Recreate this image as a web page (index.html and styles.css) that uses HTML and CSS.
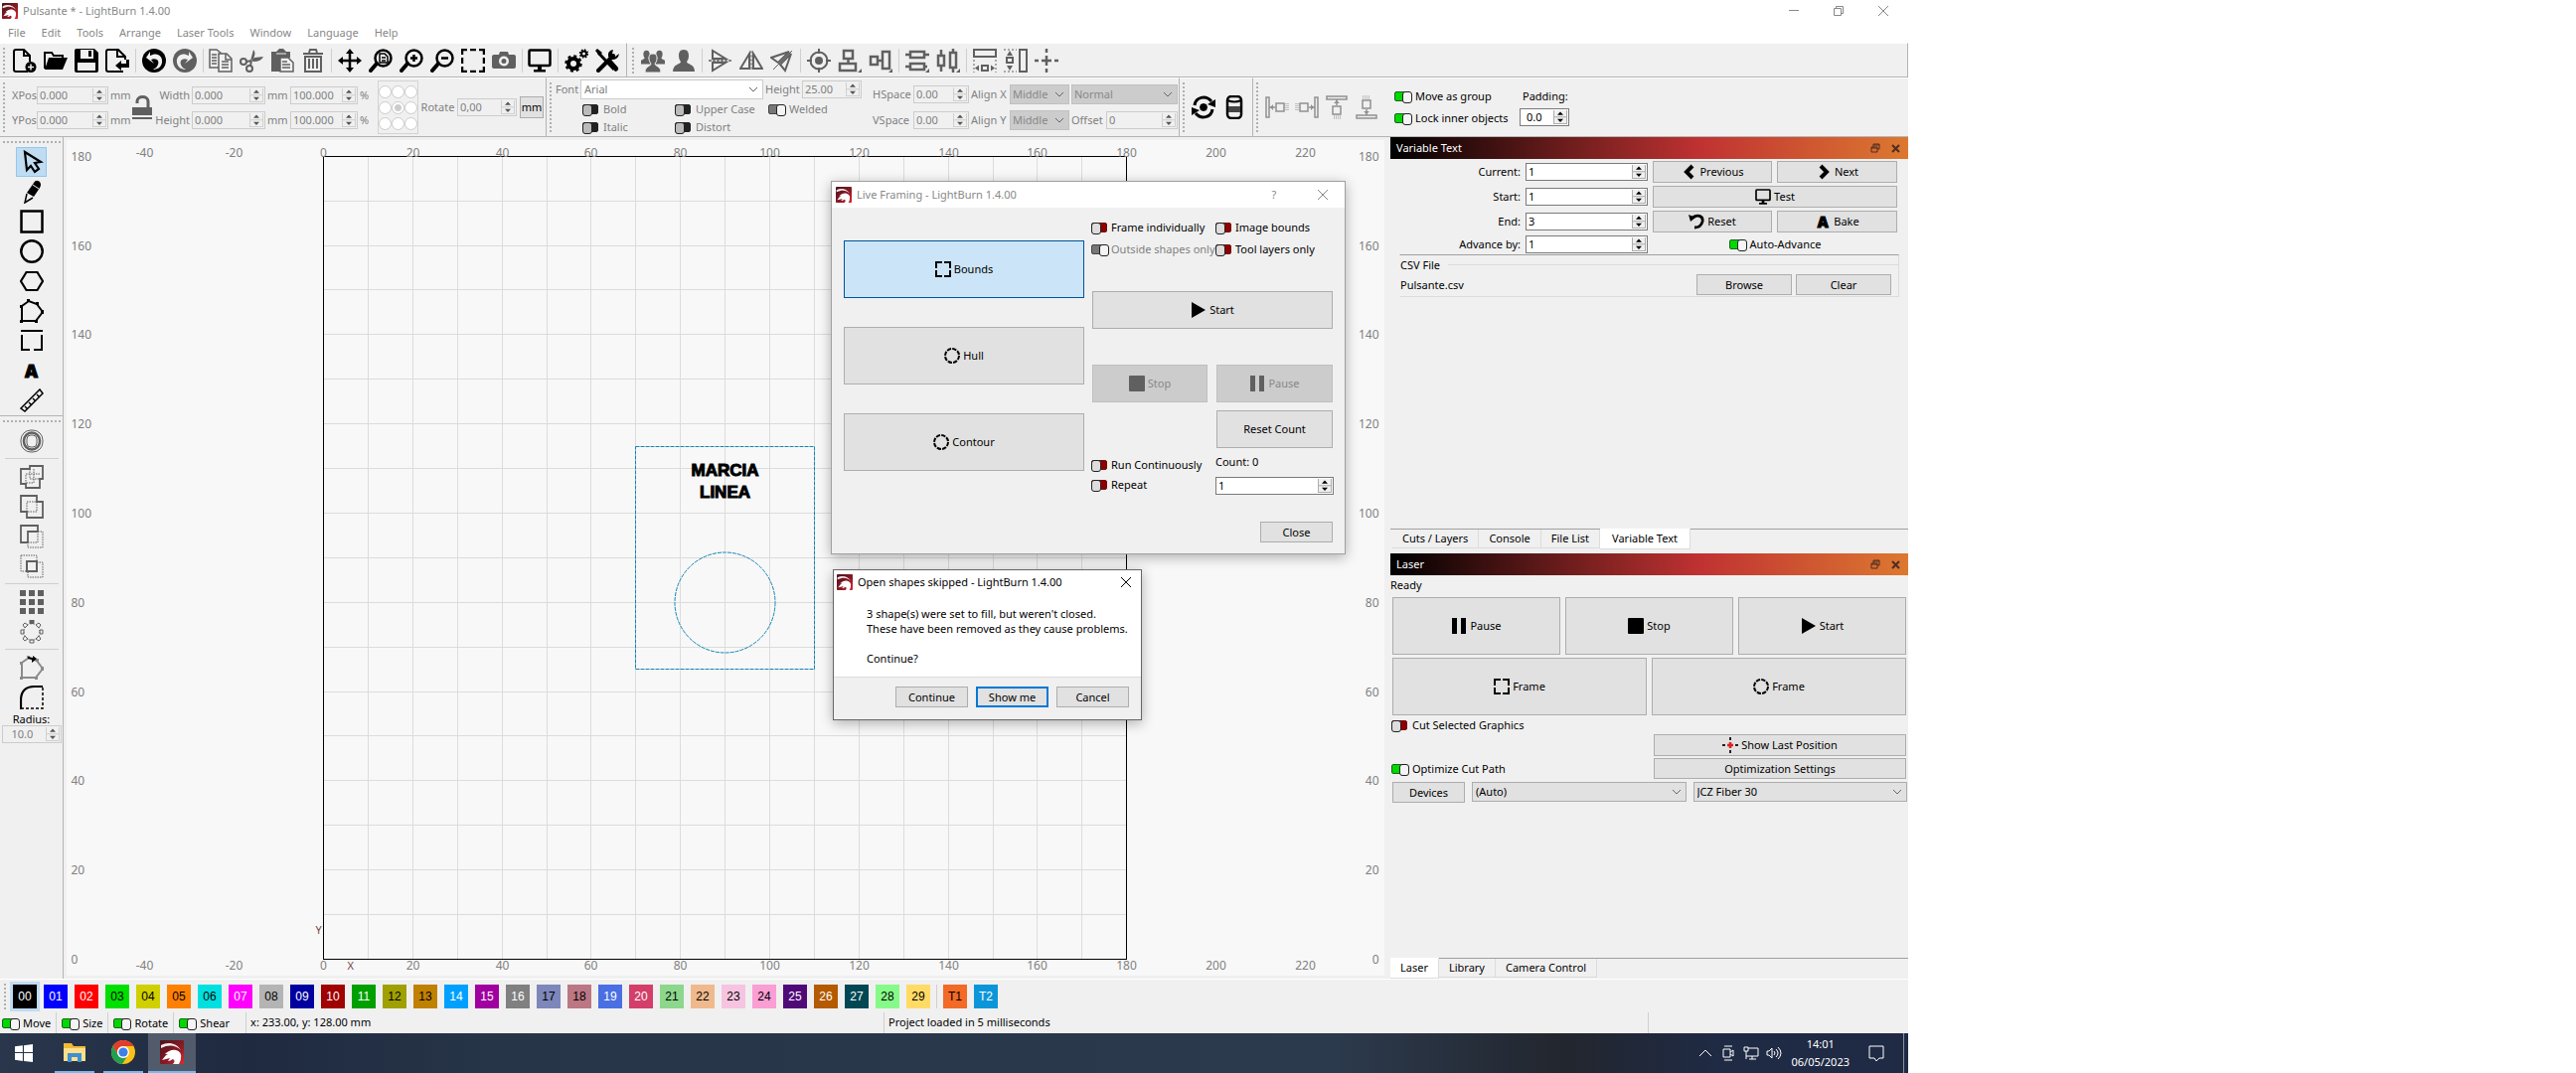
FILE: index.html
```html
<!DOCTYPE html>
<html lang="en">
<head>
<meta charset="utf-8">
<title>Pulsante * - LightBurn 1.4.00</title>
<link rel="stylesheet" href="styles.css">
</head>
<body>
<svg class="defs" aria-hidden="true">
<defs>
<linearGradient id="g-logo" x1="0" y1="0" x2="1" y2="1"><stop offset="0" stop-color="#4a141c"/><stop offset=".6" stop-color="#8c1a26"/><stop offset="1" stop-color="#e02a30"/></linearGradient>
<symbol id="logo" viewBox="0 0 24 24"><rect width="24" height="24" rx="1" fill="url(#g-logo)"/><path d="M1 5C8 1 17 3 21 10c-5-5-12-6-20-2z" fill="#f3e9e9"/><path d="M2 20c2-2 3-5 6-6l-3 0c3-3 7-5 11-4 4 1 6 4 5 8 0 2-1 4-2 6h-6c2-2 2-4 0-5-2 1-3 2-5 2l2-3-4 1z" fill="#fff"/></symbol>
<symbol id="new" viewBox="0 0 24 24"><path d="M15 23H3q-2 0-2-2V3q0-2 2-2h8l6 6v6M11 1v6h6" fill="none" stroke="currentColor" stroke-width="2"/><circle cx="18" cy="18.500" r="5.500" fill="currentColor"/><path d="M18 15.500v6M15 18.500h6" stroke="#f0f0f0" stroke-width="1.500"/></symbol>
<symbol id="open" viewBox="0 0 24 24"><path d="M1 20V4h7l2 3h9v3" fill="none" stroke="currentColor" stroke-width="2"/><path d="M5 9h19l-5 12H1z" fill="currentColor"/></symbol>
<symbol id="save" viewBox="0 0 24 24"><path fill-rule="evenodd" fill="currentColor" d="M2 0h18l4 4v18q0 2-2 2H2q-2 0-2-2V2q0-2 2-2zM6 1v9h13V1zM3 14v8h18v-8zM14 2h3v6h-3z"/></symbol>
<symbol id="export" viewBox="0 0 24 24"><path d="M20 11V8l-7-7H3q-2 0-2 2v18q0 2 2 2h15M12 1v7h8" fill="none" stroke="currentColor" stroke-width="2"/><path d="M10 17l6-5v3h5v-4h3v8h-8v3z" fill="currentColor"/></symbol>
<symbol id="undo" viewBox="0 0 24 24"><circle cx="12" cy="12" r="12" fill="currentColor"/><path d="M4 9l4-6v4c7-4 13 0 12 7-1 5-5 7-9 7 5-2 7-8 4-10-2-1-4-1-6 0l3 4z" fill="#f0f0f0"/></symbol>
<symbol id="copy" viewBox="0 0 24 24"><g fill="#f0f0f0" stroke="currentColor" stroke-width="1.500"><path d="M1 1h7l5 4v14H1z"/><path d="M10 5h8l5 5v13H10z"/></g><path d="M3 6h5M3 9h5M3 12h5M3 15h5M13 13h7M13 16h7M13 19h7M17 5v6h6" stroke="currentColor" stroke-width="1.500" fill="none"/></symbol>
<symbol id="cut" viewBox="0 0 24 24"><g fill="none" stroke="currentColor" stroke-width="2"><circle cx="4" cy="13" r="3"/><circle cx="10" cy="20" r="3"/><path d="M7 13l5-1M11 17l1-5"/></g><path d="M11 12L14 1q3 3 0 9zM12 12l3-3 9-1q-2 5-10 5z" fill="currentColor"/></symbol>
<symbol id="paste" viewBox="0 0 24 24"><path d="M1 3h5l3-3h4l3 3h4v6h-9v14H1z" fill="currentColor"/><path d="M6 5h10" stroke="#f0f0f0"/><path d="M10 9h8l5 5v9H10z" fill="#f0f0f0" stroke="currentColor" stroke-width="1.500"/><path d="M12 13h5M12 16h8M12 19h8" stroke="currentColor" stroke-width="1.500"/></symbol>
<symbol id="trash" viewBox="0 0 24 24"><path d="M2 5h20M8 4l1-3h6l1 3M4 8v15h16V8z" fill="none" stroke="currentColor" stroke-width="2"/><path d="M8 10v10M12 10v10M16 10v10" stroke="currentColor" stroke-width="2"/></symbol>
<symbol id="move" viewBox="0 0 24 24"><path d="M12 3v18M3 12h18" stroke="currentColor" stroke-width="2.500"/><path d="M12 0l4 5H8zM12 24l-4-5h8zM0 12l5-4v8zM24 12l-5 4V8z" fill="currentColor"/></symbol>
<symbol id="mag" viewBox="0 0 24 24"><circle cx="14.500" cy="9.500" r="8" fill="none" stroke="currentColor" stroke-width="2.500"/><path d="M8 15l-6 7" stroke="currentColor" stroke-width="4" stroke-linecap="round"/></symbol>
<symbol id="zpage" viewBox="0 0 24 24"><use href="#mag"/><path d="M11 5h5l3 3v6h-8zM13 9h4M13 12h4" fill="none" stroke="currentColor" stroke-width="1.500"/></symbol>
<symbol id="zin" viewBox="0 0 24 24"><use href="#mag"/><path d="M14.500 6v7M11 9.500h7" stroke="currentColor" stroke-width="2.500"/></symbol>
<symbol id="zout" viewBox="0 0 24 24"><use href="#mag"/><path d="M11 9.500h7" stroke="currentColor" stroke-width="2.500"/></symbol>
<symbol id="marquee" viewBox="0 0 24 24"><path d="M1 6V1h5M9 1h6M18 1h5v5M23 9v6M23 18v5h-5M15 23H9M6 23H1v-5M1 15V9" fill="none" stroke="currentColor" stroke-width="2.500"/></symbol>
<symbol id="camera" viewBox="0 0 24 24"><path fill-rule="evenodd" fill="currentColor" d="M2 6h5l1-3h8l1 3h5q2 0 2 2v10q0 2-2 2H2q-2 0-2-2V8q0-2 2-2zM12 7.500a5 5 0 100 10 5 5 0 000-10zM12 10a2.500 2.500 0 110 5 2.500 2.500 0 010-5z"/></symbol>
<symbol id="monitor" viewBox="0 0 24 24"><rect x="1.500" y="1.500" width="21" height="15.500" rx="1" fill="none" stroke="currentColor" stroke-width="2.500"/><path d="M10 17h4v4h4v2.500H6V21h4z" fill="currentColor"/></symbol>
<symbol id="gears" viewBox="0 0 24 24"><g fill="none" stroke="currentColor"><circle cx="9" cy="15" r="5" stroke-width="4"/><circle cx="9" cy="15" r="7.500" stroke-width="2.500" stroke-dasharray="3 2.890"/><circle cx="19.500" cy="5" r="2.500" stroke-width="2"/><circle cx="19.500" cy="5" r="4" stroke-width="1.500" stroke-dasharray="1.600 1.540"/></g></symbol>
<symbol id="tools" viewBox="0 0 24 24"><path d="M3 4l16 17" stroke="currentColor" stroke-width="3"/><path d="M13 14l3-3 7 8q1 3-3 4z M0 2l2-2 5 4-3 3z" fill="currentColor"/><path d="M3 22L18 7" stroke="currentColor" stroke-width="4" stroke-linecap="round"/><path d="M18 1q-6 1-5 7l4 3q6 0 7-6l-4 3-3-3z" fill="currentColor"/></symbol>
<symbol id="person" viewBox="0 0 24 24"><path d="M12 1c4 0 5 3 5 6s-1 5-2 6c0 3 8 2 8 10H1c0-8 8-7 8-10-1-1-2-3-2-6s1-6 5-6z" fill="currentColor"/></symbol>
<symbol id="people" viewBox="0 0 24 24"><g fill="currentColor"><use href="#person" x="-2" y="0" width="15" height="17"/><use href="#person" x="11" y="0" width="15" height="17"/><path stroke="#f0f0f0" d="M12 5c4 0 4 3 4 5s-1 4-2 5c0 3 6 2 6 9H4c0-7 6-6 6-9-1-1-2-3-2-5s0-5 4-5z"/></g></symbol>
<symbol id="flipv" viewBox="0 0 24 24"><path d="M4 2v8h13zM4 22v-8h13z" fill="none" stroke="currentColor" stroke-width="2"/><path d="M0 12h24" stroke="currentColor" stroke-width="1.500" stroke-dasharray="3 1"/></symbol>
<symbol id="fliph" viewBox="0 0 24 24"><path d="M1 20h9V5zM23 20h-9V5z" fill="none" stroke="currentColor" stroke-width="2"/><path d="M12 2v20" stroke="currentColor" stroke-dasharray="3 1"/></symbol>
<symbol id="mirror" viewBox="0 0 24 24"><path d="M1 9l18-6L8 14zM21 5L10 16l5 6z" fill="none" stroke="currentColor" stroke-width="2"/><path d="M3 21L22 2" stroke="currentColor"/></symbol>
<symbol id="target" viewBox="0 0 24 24"><circle cx="12" cy="12" r="8.500" fill="none" stroke="currentColor" stroke-width="2"/><circle cx="12" cy="12" r="4" fill="currentColor"/><path d="M12 0v5M12 19v5M0 12h5M19 12h5" stroke="currentColor" stroke-width="2"/></symbol>
<symbol id="alv" viewBox="0 0 24 24"><path d="M6 2h9v8H6zM2 15h16v7H2zM10.500 10v5" fill="none" stroke="currentColor" stroke-width="2.500"/><path d="M24 20v4h-4z" fill="currentColor"/></symbol>
<symbol id="alh" viewBox="0 0 24 24"><path d="M2 8h7v8H2zM14 3h7v17h-7zM9 12h5" fill="none" stroke="currentColor" stroke-width="2.500"/><path d="M24 20v4h-4z" fill="currentColor"/></symbol>
<symbol id="div" viewBox="0 0 24 24"><path d="M5 3h14v6H5zM5 15h14v6H5zM0 6h5M19 6h5M0 18h5M19 18h3" fill="none" stroke="currentColor" stroke-width="2.500"/><path d="M24 20v4h-4z" fill="currentColor"/></symbol>
<symbol id="dih" viewBox="0 0 24 24"><path d="M2 7h6v10H2zM14 4h6v15h-6zM5 1v6M5 17v6M17 0v4M17 19v5" fill="none" stroke="currentColor" stroke-width="2.500"/><path d="M24 20v4h-4z" fill="currentColor"/></symbol>
<symbol id="mvw" viewBox="0 0 24 24"><path d="M1 1h22v7H1zM9 17h6v5H9z" fill="none" stroke="currentColor" stroke-width="2"/><path d="M1 11v13M23 11v13" stroke="currentColor" stroke-dasharray="2 2"/><path d="M2 19.500l4-3v6zM22 19.500l-4-3v6z" fill="currentColor"/></symbol>
<symbol id="mvh" viewBox="0 0 24 24"><path d="M16 1h7v22h-7zM3 9h6v5H3z" fill="none" stroke="currentColor" stroke-width="2"/><path d="M0 1h13M0 23h13" stroke="currentColor" stroke-dasharray="2 2"/><path d="M6 2l3 5H3zM6 22l-3-5h6z" fill="currentColor"/></symbol>
<symbol id="cross" viewBox="0 0 24 24"><path d="M12 0v4M12 7v10M12 20v4M0 12h4M7 12h10M20 12h4" stroke="currentColor" stroke-width="2.500"/></symbol>
<symbol id="lock" viewBox="0 0 24 24"><path d="M2 12h20v8H2zM2 22h20v2H2z" fill="currentColor"/><path d="M7 8V6c0-6 11-6 11 0v6" fill="none" stroke="currentColor" stroke-width="3"/></symbol>
<symbol id="cycle" viewBox="0 0 24 24"><path d="M3 10C4 2 14-1 20 6M21 14c-1 8-11 11-17 4" fill="none" stroke="currentColor" stroke-width="3"/><path d="M24 4v8l-8-3zM0 20v-8l8 3z" fill="currentColor"/><path d="M12 8l3 1 1 3-1 3-3 1-3-1-1-3 1-3z" fill="currentColor"/></symbol>
<symbol id="rotary" viewBox="0 0 24 24"><rect x="5" y="1" width="14" height="22" rx="4" fill="none" stroke="currentColor" stroke-width="2.500"/><path d="M5 5q7 3 14 0" fill="none" stroke="currentColor" stroke-width="2"/><path d="M6 11h12v6H6z" fill="#444"/></symbol>
<symbol id="pushl" viewBox="0 0 24 24"><path d="M1 2h3v20H1zM11 8h8v8h-8zM4 12h6" fill="none" stroke="currentColor" stroke-width="1.500"/><path d="M5 12l3-3v6z" fill="currentColor"/><path d="M21 8v8M23 8v8" stroke="currentColor" stroke-dasharray="1 1"/></symbol>
<symbol id="arrow" viewBox="0 0 24 24"><path d="M5 2l16 10-6 1 4 6-4 3-4-6-4 4z" fill="none" stroke="currentColor" stroke-width="2.200"/></symbol>
<symbol id="pencil" viewBox="0 0 24 24"><path d="M14 3q2-4 6-1 2 3 0 6l-6 9-7-4z" fill="currentColor"/><path d="M7 14l-2 9 8-5" fill="none" stroke="currentColor" stroke-width="1.500"/><path d="M13 5l6 4" stroke="#f0f0f0"/></symbol>
<symbol id="rect" viewBox="0 0 24 24"><rect x="1.500" y="1.500" width="21" height="21" fill="none" stroke="currentColor" stroke-width="2.500"/></symbol>
<symbol id="ellipse" viewBox="0 0 24 24"><circle cx="12" cy="12" r="10.700" fill="none" stroke="currentColor" stroke-width="2.500"/></symbol>
<symbol id="hexagon" viewBox="0 0 24 24"><path d="M1 12l5.500-9h11L23 12l-5.500 9h-11z" fill="none" stroke="currentColor" stroke-width="2.200"/></symbol>
<symbol id="poly" viewBox="0 0 24 24"><path d="M2 22V7l7-5 8 3 6 8-7 9z" fill="none" stroke="currentColor" stroke-width="2"/><path d="M0 6h3v3H0zM7 0h3v3H7zM16 3h3v3h-3zM21 11h3v4h-3zM15 21h3v3h-3zM0 21h3v3H0z" fill="currentColor"/></symbol>
<symbol id="brackets" viewBox="0 0 24 24"><path d="M1 2h22M2 6v15h8M14 21h8V6" fill="none" stroke="currentColor" stroke-width="2"/></symbol>
<symbol id="ruler" viewBox="0 0 24 24"><path d="M1 20L20 1l3 4L5 23zM5 18l2 2M9 14l2 2M13 10l2 2M17 6l2 2" fill="none" stroke="currentColor" stroke-width="1.500"/></symbol>
<symbol id="offset" viewBox="0 0 24 24"><g fill="none" stroke="currentColor"><rect x="1" y="1" width="22" height="22" rx="10"/><rect x="4" y="3.500" width="16" height="17" rx="8" stroke-width="2.500"/><rect x="7" y="6" width="10" height="12" rx="4"/></g></symbol>
<symbol id="weld" viewBox="0 0 24 24"><path d="M1 4h9V1h13v13h-3v9H6v-4H1z" fill="none" stroke="currentColor" stroke-width="1.800"/><path d="M10 4v10h10M6 19V9h14M14 4v14H6" fill="none" stroke="currentColor" stroke-dasharray="1.500 1"/></symbol>
<symbol id="union" viewBox="0 0 24 24"><path d="M1 1h16v6h6v16H7v-6H1z" fill="none" stroke="currentColor" stroke-width="1.800"/><path d="M7 7h10v10H7z" fill="none" stroke="currentColor" stroke-dasharray="1.500 1"/></symbol>
<symbol id="subtract" viewBox="0 0 24 24"><path d="M1 1h17v6H8v11H1z" fill="none" stroke="currentColor" stroke-width="1.800"/><path d="M8 18h10V7M18 7h5v16H8v-5" fill="none" stroke="currentColor" stroke-dasharray="1.500 1"/></symbol>
<symbol id="intersect" viewBox="0 0 24 24"><path d="M7 7h10v10H7z" fill="none" stroke="currentColor" stroke-width="2"/><path d="M1 1h16v6M1 1v16h6M17 8h6v15H8v-6" fill="none" stroke="currentColor" stroke-dasharray="1.500 1"/></symbol>
<symbol id="grid" viewBox="0 0 24 24"><path d="M0 0h6v6H0zM9 0h6v6H9zM18 0h6v6h-6zM0 9h6v6H0zM9 9h6v6H9zM18 9h6v6h-6zM0 18h6v6H0zM9 18h6v6H9zM18 18h6v6h-6z" fill="currentColor"/></symbol>
<symbol id="ring" viewBox="0 0 24 24"><path d="M9.500 0h5v4h-5z" fill="currentColor"/><path d="M10 20h4v3h-4zM1 10h3v4H1zM20 10h3v4h-3zM5 3l3 2-3 3-2-3zM19 3l2 2-2 3-3-3zM5 16l3 3-3 2-2-2zM19 16l2 3-2 2-3-2z" fill="none" stroke="currentColor"/><circle cx="12" cy="12" r="8" fill="none" stroke="currentColor" stroke-dasharray="1 2"/></symbol>
<symbol id="startpt" viewBox="0 0 24 24"><use href="#poly" opacity=".7"/><path d="M8 1l5 1V0l4 3-5 4V4L8 3z" fill="#000"/></symbol>
<symbol id="radius" viewBox="0 0 24 24"><path d="M1 24V15Q1 1 15 1h8" fill="none" stroke="currentColor" stroke-width="2.200"/><path d="M23 2v21H1" fill="none" stroke="currentColor" stroke-width="1.500" stroke-dasharray="3 2"/></symbol>
<symbol id="fsq" viewBox="0 0 16 16"><path d="M1 7V1h6M9 1h6v6M15 9v6H9M7 15H1V9" fill="none" stroke="currentColor" stroke-width="2"/></symbol>
<symbol id="fci" viewBox="0 0 16 16"><circle cx="8" cy="8" r="7" fill="none" stroke="currentColor" stroke-width="2" stroke-dasharray="4.300 1.200"/></symbol>
<symbol id="play" viewBox="0 0 16 16"><path d="M1 0l14 8-14 8z" fill="currentColor"/></symbol>
<symbol id="stop" viewBox="0 0 16 16"><rect width="16" height="16" rx="1" fill="currentColor"/></symbol>
<symbol id="pause" viewBox="0 0 16 16"><path d="M1 0h5v16H1zM10 0h5v16h-5z" fill="currentColor"/></symbol>
<symbol id="prev" viewBox="0 0 16 16"><path d="M12 2L6 8l6 6" fill="none" stroke="currentColor" stroke-width="4"/></symbol>
<symbol id="next" viewBox="0 0 16 16"><path d="M5 2l6 6-6 6" fill="none" stroke="currentColor" stroke-width="4"/></symbol>
<symbol id="reset" viewBox="0 0 16 16"><path d="M4 4c6-4 11-1 10 4-1 4-4 6-8 6" fill="none" stroke="currentColor" stroke-width="2.800"/><path d="M0 1l2 7 5-4z" fill="currentColor"/></symbol>
<symbol id="lastpos" viewBox="0 0 16 16"><path d="M8 0v3M8 13v3M0 8h3M13 8h3" stroke="#222" stroke-width="2"/><path d="M8 5v6M5 8h6" stroke="#e02020" stroke-width="2.500"/></symbol>
<symbol id="close" viewBox="0 0 10 10"><path d="M0 0l10 10M10 0L0 10" stroke="currentColor"/></symbol>
<symbol id="dclose" viewBox="0 0 10 10"><path d="M1 2l7 7M8 2L1 9" stroke="currentColor" stroke-width="2"/></symbol>
<symbol id="float" viewBox="0 0 10 10"><path d="M3 4V1h6v5H7M1 4h6v5H1zM1 5h6M3 2h6" fill="none" stroke="currentColor"/></symbol>
<symbol id="restore" viewBox="0 0 10 10"><path d="M2.500 2.500v-2h7v7h-2M.500 2.500h7v7h-7z" fill="none" stroke="currentColor"/></symbol>
<symbol id="min" viewBox="0 0 10 10"><path d="M0 4.500h10" stroke="currentColor"/></symbol>
<symbol id="win" viewBox="0 0 16 16"><path d="M0 2l7-1v6H0zM8 1l8-1v7H8zM0 8h7v7l-7-1zM8 8h8v8l-8-1z" fill="#fff"/></symbol>
<symbol id="folder" viewBox="0 0 24 24"><path d="M1 3h8l2 3h12v15H1z" fill="#f0b93a"/><path d="M1 8h22v13H1z" fill="#ffe08a"/><path d="M5 22v-9h14v9h-4v-5H9v5z" fill="#3f8fd2"/></symbol>
<symbol id="chrome" viewBox="0 0 24 24"><circle cx="12" cy="12" r="12" fill="#fbc116"/><path d="M1.600 6A12 12 0 0122.400 6H12a6 6 0 00-5.500 8.500z" fill="#e33b2e"/><path d="M1.600 6A12 12 0 0011 24l5.500-8.500a6 6 0 01-9.700-.5z" fill="#1ea052"/><circle cx="12" cy="12" r="6" fill="#fff"/><circle cx="12" cy="12" r="4.600" fill="#3f7fe8"/></symbol>
</defs>
</svg>

<div class="screen">
<main class="desktop">
  <header class="titlebar">
    <svg class="i16"><use href="#logo"/></svg><h1>Pulsante * - LightBurn 1.4.00</h1>
    <div class="winbtns"><button aria-label="Minimize"><svg class="i10"><use href="#min"/></svg></button><button aria-label="Restore"><svg class="i10"><use href="#restore"/></svg></button><button aria-label="Close"><svg class="i10"><use href="#close"/></svg></button></div>
  </header>
  <nav class="menu"><a href="#">File</a><a href="#">Edit</a><a href="#">Tools</a><a href="#">Arrange</a><a href="#">Laser Tools</a><a href="#">Window</a><a href="#">Language</a><a href="#">Help</a></nav>

  <div class="barrow icons">
    <div class="bar main-bar"><i class="grip"></i>
      <button aria-label="New"><svg class="i24"><use href="#new"/></svg></button><button aria-label="Open"><svg class="i24"><use href="#open"/></svg></button><button aria-label="Save"><svg class="i24"><use href="#save"/></svg></button><button aria-label="Import"><svg class="i24"><use href="#export"/></svg></button><i class="sep"></i>
      <button aria-label="Undo"><svg class="i24"><use href="#undo"/></svg></button><button aria-label="Redo" class="off flip"><svg class="i24"><use href="#undo"/></svg></button><i class="sep"></i>
      <button aria-label="Copy" class="off"><svg class="i24"><use href="#copy"/></svg></button><button aria-label="Cut" class="off"><svg class="i24"><use href="#cut"/></svg></button><button aria-label="Paste" class="off"><svg class="i24"><use href="#paste"/></svg></button><button aria-label="Delete" class="off"><svg class="i24"><use href="#trash"/></svg></button><i class="sep"></i>
      <button aria-label="Pan"><svg class="i24"><use href="#move"/></svg></button><button aria-label="Zoom to page"><svg class="i24"><use href="#zpage"/></svg></button><button aria-label="Zoom in"><svg class="i24"><use href="#zin"/></svg></button><button aria-label="Zoom out"><svg class="i24"><use href="#zout"/></svg></button><button aria-label="Frame selection"><svg class="i24"><use href="#marquee"/></svg></button><button aria-label="Camera" class="off"><svg class="i24"><use href="#camera"/></svg></button><i class="sep"></i>
      <button aria-label="Preview"><svg class="i24"><use href="#monitor"/></svg></button><i class="sep"></i>
      <button aria-label="Settings"><svg class="i24"><use href="#gears"/></svg></button><button aria-label="Device settings"><svg class="i24"><use href="#tools"/></svg></button>
    </div>
    <div class="bar arrange-bar grow"><i class="grip"></i>
      <button aria-label="Group" class="off"><svg class="i24"><use href="#people"/></svg></button><button aria-label="Ungroup" class="off"><svg class="i24"><use href="#person"/></svg></button><i class="sep"></i>
      <button aria-label="Flip vertical" class="off"><svg class="i24"><use href="#flipv"/></svg></button><button aria-label="Flip horizontal" class="off"><svg class="i24"><use href="#fliph"/></svg></button><button aria-label="Mirror" class="off"><svg class="i24"><use href="#mirror"/></svg></button><i class="sep"></i>
      <button aria-label="Center" class="off"><svg class="i24"><use href="#target"/></svg></button><button aria-label="Align vertical" class="off"><svg class="i24"><use href="#alv"/></svg></button><button aria-label="Align horizontal" class="off"><svg class="i24"><use href="#alh"/></svg></button><i class="sep"></i>
      <button aria-label="Distribute vertical" class="off"><svg class="i24"><use href="#div"/></svg></button><button aria-label="Distribute horizontal" class="off"><svg class="i24"><use href="#dih"/></svg></button><i class="sep"></i>
      <button aria-label="Match width" class="off"><svg class="i24"><use href="#mvw"/></svg></button><button aria-label="Match height" class="off"><svg class="i24"><use href="#mvh"/></svg></button><button aria-label="Move to position" class="off"><svg class="i24"><use href="#cross"/></svg></button>
    </div>
  </div>

  <div class="barrow props">
    <div class="bar pos-bar dim"><i class="grip"></i>
      <div class="posgrid">
        <label for="xpos">XPos</label><span class="spin"><input id="xpos" value="0.000" disabled><b></b></span><span>mm</span>
        <svg class="i24 lock"><use href="#lock"/></svg>
        <label for="w" class="r">Width</label><span class="spin"><input id="w" value="0.000" disabled><b></b></span><span>mm</span><span class="spin"><input aria-label="Width percent" value="100.000" disabled><b></b></span><span>%</span>
        <label for="ypos">YPos</label><span class="spin"><input id="ypos" value="0.000" disabled><b></b></span><span>mm</span>
        <label for="h" class="r">Height</label><span class="spin"><input id="h" value="0.000" disabled><b></b></span><span>mm</span><span class="spin"><input aria-label="Height percent" value="100.000" disabled><b></b></span><span>%</span>
      </div>
      <div class="anchors"><input type="radio" name="a" aria-label="Top left" disabled><input type="radio" name="a" aria-label="Top" disabled><input type="radio" name="a" aria-label="Top right" disabled><input type="radio" name="a" aria-label="Left" disabled><input type="radio" name="a" aria-label="Center" checked disabled><input type="radio" name="a" aria-label="Right" disabled><input type="radio" name="a" aria-label="Bottom left" disabled><input type="radio" name="a" aria-label="Bottom" disabled><input type="radio" name="a" aria-label="Bottom right" disabled></div>
      <label for="rot" class="rot">Rotate</label><span class="spin rotspin"><input id="rot" value="0,00" disabled><b></b></span>
      <button class="btn mm">mm</button>
    </div>
    <div class="bar text-bar dim"><i class="grip"></i>
      <div class="fontbox">
        <div class="fontrow"><label for="font">Font</label><select id="font"><option>Arial</option></select><label for="fh">Height</label><span class="spin"><input id="fh" value="25.00" disabled><b></b></span></div>
        <div class="switches"><label><input type="checkbox" class="tg dark">Bold</label><label><input type="checkbox" class="tg dark">Upper Case</label><label><input type="checkbox" class="tg gray" checked>Welded</label><label><input type="checkbox" class="tg dark">Italic</label><label><input type="checkbox" class="tg dark">Distort</label></div>
      </div>
      <div class="spacing">
        <label for="hs">HSpace</label><span class="spin"><input id="hs" value="0.00" disabled><b></b></span><label for="ax" class="al">Align X</label><select id="ax" disabled><option>Middle</option></select><select class="wide" aria-label="Mode" disabled><option>Normal</option></select>
        <label for="vs">VSpace</label><span class="spin"><input id="vs" value="0.00" disabled><b></b></span><label for="ay" class="al">Align Y</label><select id="ay" disabled><option>Middle</option></select><span class="offs"><label for="of">Offset</label><span class="spin"><input id="of" value="0" disabled><b></b></span></span>
      </div>
    </div>
    <div class="bar rotary-bar"><i class="grip"></i><button aria-label="Rotary"><svg class="i24"><use href="#cycle"/></svg></button><button aria-label="Cylinder"><svg class="i24"><use href="#rotary"/></svg></button></div>
    <div class="bar dock-bar grow"><i class="grip"></i>
      <button class="faint" aria-label="Dock left"><svg class="i24"><use href="#pushl"/></svg></button><button class="faint flip" aria-label="Dock right"><svg class="i24"><use href="#pushl"/></svg></button><button class="faint up" aria-label="Dock up"><svg class="i24"><use href="#pushl"/></svg></button><button class="faint down" aria-label="Dock down"><svg class="i24"><use href="#pushl"/></svg></button>
      <div class="docksw"><label><input type="checkbox" class="tg" checked>Move as group</label><label><input type="checkbox" class="tg" checked>Lock inner objects</label></div>
      <div class="padding"><label for="pad">Padding:</label><span class="spin on"><input id="pad" value="0.0"><b></b></span></div>
    </div>
  </div>

  <div class="work">
    <aside class="rail">
      <div class="tools"><i class="hgrip"></i>
        <button class="sel" aria-label="Select"><svg class="i24"><use href="#arrow"/></svg></button><button aria-label="Draw lines"><svg class="i24"><use href="#pencil"/></svg></button><button aria-label="Rectangle"><svg class="i24"><use href="#rect"/></svg></button><button aria-label="Ellipse"><svg class="i24"><use href="#ellipse"/></svg></button><button aria-label="Polygon"><svg class="i24"><use href="#hexagon"/></svg></button><button aria-label="Edit nodes"><svg class="i24"><use href="#poly"/></svg></button><button aria-label="Tabs"><svg class="i24"><use href="#brackets"/></svg></button><button class="glyph">A</button><button aria-label="Measure"><svg class="i24"><use href="#ruler"/></svg></button>
      </div>
      <div class="tools lower"><i class="hgrip"></i>
        <button class="off" aria-label="Offset shapes"><svg class="i24"><use href="#offset"/></svg></button><i class="hsep"></i>
        <button class="off" aria-label="Weld"><svg class="i24"><use href="#weld"/></svg></button><button class="off" aria-label="Union"><svg class="i24"><use href="#union"/></svg></button><button class="off" aria-label="Subtract"><svg class="i24"><use href="#subtract"/></svg></button><button class="off" aria-label="Intersect"><svg class="i24"><use href="#intersect"/></svg></button><i class="hsep"></i>
        <button class="off" aria-label="Grid array"><svg class="i24"><use href="#grid"/></svg></button><button class="off" aria-label="Circular array"><svg class="i24"><use href="#ring"/></svg></button><i class="hsep"></i>
        <button class="off" aria-label="Start point"><svg class="i24"><use href="#startpt"/></svg></button><button aria-label="Radius"><svg class="i24"><use href="#radius"/></svg></button>
        <label for="rad">Radius:</label><span class="spin dim"><input id="rad" value="10.0" disabled><b></b></span>
      </div>
    </aside>

    <section class="canvas">
      <svg viewBox="0 0 1326 841" preserveAspectRatio="xMidYMid meet">
        <g transform="translate(258.500 824.500)">
          <path class="gl" d="M45 0v-808M90 0v-808M135 0v-808M180 0v-808M225 0v-808M269 0v-808M314 0v-808M359 0v-808M404 0v-808M449 0v-808M494 0v-808M539 0v-808M584 0v-808M629 0v-808M674 0v-808M718 0v-808M763 0v-808M0-45h808M0-90h808M0-135h808M0-180h808M0-225h808M0-269h808M0-314h808M0-359h808M0-404h808M0-449h808M0-494h808M0-539h808M0-584h808M0-629h808M0-674h808M0-718h808M0-763h808"/>
          <rect class="bed" x="0" y="-808" width="808" height="808"/>
          <g class="mid"><text x="-180" y="-808">-40</text><text x="-90" y="-808">-20</text><text x="0" y="-808">0</text><text x="90" y="-808">20</text><text x="180" y="-808">40</text><text x="269" y="-808">60</text><text x="359" y="-808">80</text><text x="449" y="-808">100</text><text x="539" y="-808">120</text><text x="629" y="-808">140</text><text x="718" y="-808">160</text><text x="808" y="-808">180</text><text x="898" y="-808">200</text><text x="988" y="-808">220</text>
          <text x="-180" y="10">-40</text><text x="-90" y="10">-20</text><text x="0" y="10">0</text><text x="90" y="10">20</text><text x="180" y="10">40</text><text x="269" y="10">60</text><text x="359" y="10">80</text><text x="449" y="10">100</text><text x="539" y="10">120</text><text x="629" y="10">140</text><text x="718" y="10">160</text><text x="808" y="10">180</text><text x="898" y="10">200</text><text x="988" y="10">220</text></g>
          <g><text x="-254" y="-804">180</text><text x="-254" y="-714">160</text><text x="-254" y="-625">140</text><text x="-254" y="-535">120</text><text x="-254" y="-445">100</text><text x="-254" y="-355">80</text><text x="-254" y="-265">60</text><text x="-254" y="-176">40</text><text x="-254" y="-86">20</text><text x="-254" y="4">0</text></g>
          <g class="end"><text x="1062" y="-804">180</text><text x="1062" y="-714">160</text><text x="1062" y="-625">140</text><text x="1062" y="-535">120</text><text x="1062" y="-445">100</text><text x="1062" y="-355">80</text><text x="1062" y="-265">60</text><text x="1062" y="-176">40</text><text x="1062" y="-86">20</text><text x="1062" y="4">0</text></g>
          <g class="axis"><text x="-8" y="-26">Y</text><text x="24" y="10">X</text></g>
          <rect class="shape" x="314" y="-516" width="180" height="224"/>
          <circle class="shape" cx="404" cy="-359" r="50.500"/>
          <g class="word"><text x="404" y="-487">MARCIA</text><text x="404" y="-465">LINEA</text></g>
        </g>
      </svg>
    </section>

    <aside class="docks">
      <section class="dock top">
        <h2>Variable Text<span><svg class="i10"><use href="#float"/></svg><svg class="i10"><use href="#dclose"/></svg></span></h2>
        <div class="vars">
          <label for="cur">Current:</label><span class="spin on"><input id="cur" value="1"><b></b></span><button class="btn"><svg class="i16"><use href="#prev"/></svg>Previous</button><button class="btn"><svg class="i16"><use href="#next"/></svg>Next</button>
          <label for="st">Start:</label><span class="spin on"><input id="st" value="1"><b></b></span><button class="btn two"><svg class="i16"><use href="#monitor"/></svg>Test</button>
          <label for="en">End:</label><span class="spin on"><input id="en" value="3"><b></b></span><button class="btn"><svg class="i16"><use href="#reset"/></svg>Reset</button><button class="btn"><span class="ga">A</span>Bake</button>
          <label for="ad">Advance by:</label><span class="spin on"><input id="ad" value="1"><b></b></span><label class="two auto"><input type="checkbox" class="tg" checked>Auto-Advance</label>
        </div>
        <fieldset class="csv"><legend>CSV File</legend><div><span>Pulsante.csv</span><button class="btn">Browse</button><button class="btn">Clear</button></div></fieldset>
        <nav class="tabs"><button>Cuts / Layers</button><button>Console</button><button>File List</button><button class="cur">Variable Text</button></nav>
      </section>
      <section class="dock bottom">
        <h2>Laser<span><svg class="i10"><use href="#float"/></svg><svg class="i10"><use href="#dclose"/></svg></span></h2>
        <p class="ready">Ready</p>
        <div class="run three"><button class="btn"><svg class="i16"><use href="#pause"/></svg>Pause</button><button class="btn"><svg class="i16"><use href="#stop"/></svg>Stop</button><button class="btn"><svg class="i16"><use href="#play"/></svg>Start</button></div>
        <div class="run"><button class="btn"><svg class="i16"><use href="#fsq"/></svg>Frame</button><button class="btn"><svg class="i16"><use href="#fci"/></svg>Frame</button></div>
        <label class="cutsel"><input type="checkbox" class="tg">Cut Selected Graphics</label>
        <div class="opt"><span></span><button class="btn"><svg class="i16"><use href="#lastpos"/></svg>Show Last Position</button><label><input type="checkbox" class="tg" checked>Optimize Cut Path</label><button class="btn">Optimization Settings</button></div>
        <div class="dev"><button class="btn">Devices</button><select aria-label="Port"><option>(Auto)</option></select><select aria-label="Device"><option>JCZ Fiber 30</option></select></div>
        <nav class="tabs low"><button class="cur">Laser</button><button>Library</button><button>Camera Control</button></nav>
      </section>
    </aside>

    <div class="dialog framing" role="dialog" aria-label="Live Framing">
      <header><svg class="i16"><use href="#logo"/></svg><span>Live Framing - LightBurn 1.4.00</span><button aria-label="Help">?</button><button aria-label="Close dialog"><svg class="i10"><use href="#close"/></svg></button></header>
      <div class="fbody">
        <div class="modes"><button class="btn on"><svg class="i16"><use href="#fsq"/></svg>Bounds</button><button class="btn"><svg class="i16"><use href="#fci"/></svg>Hull</button><button class="btn"><svg class="i16"><use href="#fci"/></svg>Contour</button></div>
        <div class="ctl">
          <label><input type="checkbox" class="tg">Frame individually</label><label><input type="checkbox" class="tg">Image bounds</label>
          <label class="dim"><input type="checkbox" class="tg gray" checked>Outside shapes only</label><label><input type="checkbox" class="tg">Tool layers only</label>
          <button class="btn two start"><svg class="i16"><use href="#play"/></svg>Start</button>
          <button class="btn" disabled><svg class="i16"><use href="#stop"/></svg>Stop</button><button class="btn" disabled><svg class="i16"><use href="#pause"/></svg>Pause</button>
          <button class="btn rc">Reset Count</button>
          <label class="rr"><input type="checkbox" class="tg">Run Continuously</label><label class="rr" for="rep">Count: 0</label>
          <label><input type="checkbox" class="tg">Repeat</label><span class="spin on"><input id="rep" value="1"><b></b></span>
          <button class="btn cl">Close</button>
        </div>
      </div>
    </div>
    <div class="dialog skipped" role="dialog" aria-label="Open shapes skipped">
      <header><svg class="i16"><use href="#logo"/></svg><span>Open shapes skipped - LightBurn 1.4.00</span><button aria-label="Close dialog"><svg class="i10"><use href="#close"/></svg></button></header>
      <div class="msg"><p>3 shape(s) were set to fill, but weren't closed.<br>These have been removed as they cause problems.</p><p>Continue?</p></div>
      <footer><button class="btn">Continue</button><button class="btn focus">Show me</button><button class="btn">Cancel</button></footer>
    </div>
  </div>

  <div class="palette"><i class="grip"></i>
    <button class="cur" style="--c:#000;--t:#fff">00</button><button style="--c:#00f;--t:#fff">01</button><button style="--c:#f00;--t:#fff">02</button><button style="--c:#00e000;--t:#000">03</button><button style="--c:#d0d000;--t:#000">04</button><button style="--c:#ff8000;--t:#000">05</button><button style="--c:#00e0e0;--t:#000">06</button><button style="--c:#f0f;--t:#fff">07</button><button style="--c:#b4b4b4;--t:#000">08</button><button style="--c:#0000a0;--t:#fff">09</button><button style="--c:#a00000;--t:#fff">10</button><button style="--c:#00a000;--t:#fff">11</button><button style="--c:#a0a000;--t:#000">12</button><button style="--c:#c08000;--t:#000">13</button><button style="--c:#00a0ff;--t:#fff">14</button><button style="--c:#a000a0;--t:#fff">15</button><button style="--c:#808080;--t:#fff">16</button><button style="--c:#7d87b9;--t:#000">17</button><button style="--c:#bb7784;--t:#000">18</button><button style="--c:#4a6fe3;--t:#fff">19</button><button style="--c:#d33f6a;--t:#fff">20</button><button style="--c:#8cd78c;--t:#000">21</button><button style="--c:#f0b98d;--t:#000">22</button><button style="--c:#f6c4e1;--t:#000">23</button><button style="--c:#fa9ed4;--t:#000">24</button><button style="--c:#500a78;--t:#fff">25</button><button style="--c:#b45a00;--t:#fff">26</button><button style="--c:#004754;--t:#fff">27</button><button style="--c:#86fa88;--t:#000">28</button><button style="--c:#ffdb66;--t:#000">29</button><i class="sep"></i><button style="--c:#f36926;--t:#000">T1</button><button style="--c:#0c96d9;--t:#fff">T2</button>
  </div>
  <div class="status">
    <label><input type="checkbox" class="tg" checked>Move</label><label><input type="checkbox" class="tg" checked>Size</label><label><input type="checkbox" class="tg" checked>Rotate</label><label class="shear"><input type="checkbox" class="tg" checked>Shear</label>
    <span class="xy">x: 233.00, y: 128.00 mm</span><span class="info">Project loaded in 5 milliseconds</span>
  </div>
  <footer class="taskbar">
    <button aria-label="Start menu"><svg class="i18"><use href="#win"/></svg></button><button class="run-app" aria-label="File Explorer"><svg class="i24"><use href="#folder"/></svg></button><button class="run-app" aria-label="Chrome"><svg class="i24"><use href="#chrome"/></svg></button><button class="run-app act" aria-label="LightBurn"><svg class="i24"><use href="#logo"/></svg></button>
    <div class="tray">
      <svg class="i16" viewBox="0 0 16 16"><path d="M2 11l6-6 6 6"/></svg><svg class="i16" viewBox="0 0 16 16"><path d="M4 1h8M4 15h8M3 4h7v8H3zM10 7l3-2v6l-3-2"/></svg><svg class="i16" viewBox="0 0 16 16"><path d="M5 3h10v8H3M9 11v3M6 14h7M1 2h4v4H1zM3 6v8"/></svg><svg class="i16" viewBox="0 0 16 16"><path d="M1 6h2l3-3v10l-3-3H1zM8 6q2 2 0 4M10 4q4 4 0 8M12 2q6 6 0 12"/></svg>
      <time>14:01<br>06/05/2023</time>
      <svg class="i16" viewBox="0 0 16 16"><path d="M1 1h14v12h-4l-3 3-2-3H1z"/></svg><i></i>
    </div>
  </footer>
</main>
</div>
</body>
</html>
```

FILE: styles.css
```css
* { box-sizing: border-box; }
body { margin: 0; background: #fff; color: #000; font: 11px/14px "Noto Sans", sans-serif; }
button, input, select { font: inherit; color: inherit; margin: 0; padding: 0; border: 0; background: none; border-radius: 0; }
select, input[type="checkbox"], input[type="radio"] { appearance: none; }
h1, h2, p { margin: 0; font: inherit; }
label { white-space: nowrap; }
a { color: inherit; text-decoration: none; }
svg { display: block; flex: none; }
.defs { position: absolute; width: 0; height: 0; }
.i10 { width: 10px; height: 10px; }
.i16 { width: 16px; height: 16px; }
.i18 { width: 18px; height: 18px; }
.i24 { width: 24px; height: 24px; }
.off { color: #606060; }
.faint { color: #909090; }
.dim { color: #808080; }
.flip svg { transform: scaleX(-1); }
.up svg { transform: rotate(90deg); }
.down svg { transform: rotate(-90deg); }

/* page frame: the application fills the left monitor */
.screen { display: grid; grid-template-columns: 20fr 7fr; min-height: 100vh; }
.desktop { display: flex; flex-direction: column; min-width: 0; background: #f0f0f0; }

.titlebar { display: flex; align-items: center; height: 24px; padding: 0 0 2px 2px; gap: 5px; background: #fff; color: #888; }
.winbtns { display: flex; margin-left: auto; padding-right: 3px; }
.winbtns button { width: 45px; display: grid; place-items: center; height: 20px; }
.menu { display: flex; gap: 16px; height: 19px; padding: 2px 8px 0; background: #fff; color: #888; }

/* toolbars */
.barrow { display: flex; flex: none; border-bottom: 1px solid #b4b4b4; }
.bar { display: flex; align-items: center; border-right: 1px solid #b4b4b4; border-top: 1px solid #fff; }
.grow { flex: 1; }
.icons { height: 35px; }
.icons .bar { padding-left: 3px; }
.icons button { margin-right: 7px; }
.sep { width: 1px; height: 24px; background: #cfcfcf; margin: 0 6px 0 -1px; }
.grip { width: 2px; height: 26px; background: linear-gradient(#b0b0b0 2px, transparent 2px) 0 0 / 2px 4px; margin-right: 8px; flex: none; }
.arrange-bar .grip { margin-right: 7px; margin-left: 2px; }
.main-bar { width: 631px; }
.props { height: 60px; }
.props .bar { padding-left: 3px; }
.props .grip { height: 50px; margin-right: 7px; }
.props .text-bar .grip { margin-right: 4px; }
.posgrid { display: grid; grid-template-columns: 25px 72px 22px 24px 38px 74px 25px 68px 20px; grid-auto-rows: 25px; align-items: center; }
.posgrid > span:not(.spin) { padding-left: 2px; }
.posgrid .r { text-align: right; padding-right: 2px; }
.lock { grid-row: 1 / 3; grid-column: 4; color: #606060; }
.anchors { display: grid; grid-template: repeat(3, 16px) / repeat(3, 13px); place-content: center; align-items: center; width: 41px; height: 54px; border: 1px solid #d4d4d4; }
.anchors input { width: 13px; height: 13px; border: 1px solid #ccc; border-radius: 50%; background: #fff; }
.anchors input:checked { background: radial-gradient(circle, #ccc 3px, #fff 4px); }
.rot { width: 39px; text-align: center; }
.rotspin { width: 60px; }
.mm { width: 24px; height: 21px; margin: 0 2px 0 3px; }

.spin { display: flex; height: 18px; border: 1px solid #ccc; min-width: 0; }
.spin input { flex: 1; width: 0; min-width: 0; padding-left: 2px; outline: 0; }
.spin b { width: 14px; margin: 1px; border: 1px solid #d0d0d0; border-top: 0; background:
  url("data:image/svg+xml,%3Csvg xmlns='http://www.w3.org/2000/svg' width='12' height='14'%3E%3Cpath d='M3 5l3-3 3 3zM3 9l3 3 3-3z' fill='%23555'/%3E%3Cpath d='M0 7h12' stroke='%23ccc'/%3E%3C/svg%3E") center no-repeat; }
.spin.on { border-color: #7a7a7a; background: #fff; color: #000; }
.spin.on b { border-color: #adadad; background-color: #f0f0f0; background-image:
  url("data:image/svg+xml,%3Csvg xmlns='http://www.w3.org/2000/svg' width='12' height='14'%3E%3Cpath d='M3 5l3-3 3 3zM3 9l3 3 3-3z'/%3E%3Cpath d='M0 7h12' stroke='%23aaa'/%3E%3C/svg%3E"); }

select { height: 20px; padding-left: 3px; border: 1px solid #adadad; background: #e1e1e1
  url("data:image/svg+xml,%3Csvg xmlns='http://www.w3.org/2000/svg' width='10' height='6'%3E%3Cpath d='M1 1l4 4 4-4' fill='none' stroke='%23666'/%3E%3C/svg%3E") right 4px center no-repeat; min-width: 0; }
select:disabled { background-color: #ccc; border-color: #c0c0c0; color: #888; opacity: 1; padding-left: 2px; }

.fontbox { align-self: flex-start; padding-top: 1px; width: 308px; }
.fontrow { display: flex; align-items: center; }
.fontrow label { width: 25px; }
.fontrow select { width: 184px; background-color: #fff; border-color: #ccc; }
.fontrow label + span { width: 60px; }
.fontrow select + label { width: 39px; padding-left: 2px; }
.switches { display: grid; grid-template-columns: 93px 94px auto; grid-auto-rows: 18px; align-items: center; padding: 1px 0 0 27px; }
.spacing { display: grid; grid-template-columns: 41px 56px 41px 60px 109px; grid-auto-rows: 26px; align-items: center; margin: 0 1px 0 11px; }
.spacing .al { padding-left: 2px; }
.spacing select { width: 60px; }
.spacing .wide { width: 107px; margin-left: 2px; }
.offs { display: flex; align-items: center; padding-left: 2px; }
.offs label { width: 35px; }
.offs .spin { flex: 1; }
.rotary-bar { width: 74px; }
.rotary-bar button { margin-right: 7px; }
.dock-bar { border-right: 0; }
.dock-bar button { margin: 0 3px; }
.dock-bar .grip { margin-right: 4px; }
.docksw { display: grid; gap: 8px; margin-left: 13px; width: 126px; }
.padding { display: grid; gap: 5px; justify-items: start; }
.padding label { padding-left: 3px; }
.padding .spin { width: 50px; }
.padding .spin input { padding-left: 6px; }

/* switches */
label:has(.tg) { display: flex; align-items: center; gap: 5px; }
.tg { display: flex; flex: none; width: 16px; height: 10px; border-radius: 2px; background: #900000; border: 1px solid #701010; }
.tg::before { content: ""; width: 8px; height: 10px; margin: -1px 0 0 -1px; flex: none; background: #ddd; border: 1px solid #222; border-radius: 3px; }
.tg:checked { background: #00d800; border-color: #1c641c; }
.tg:checked::before { margin-left: 7px; background: #f4f4f4; }
.tg.dark { background: #222; border-color: #222; }
.tg.dark::before { background: #bbb; }
.tg.gray { background: #777; border-color: #444; }

.btn { display: flex; align-items: center; justify-content: center; gap: 3px; height: 22px; background: #e1e1e1; border: 1px solid #adadad; color: #000; white-space: nowrap; }
.btn:disabled { background: #ccc; border-color: #bfbfbf; color: #888; }
.btn:disabled svg { color: #606060; }

/* left tool rail */
.work { position: relative; display: flex; flex: 1; }
.rail { width: 64px; border-right: 1px solid #b4b4b4; flex: none; }
.tools { display: flex; flex-direction: column; align-items: center; padding-top: 4px; }
.tools button { width: 31px; height: 30px; display: grid; place-items: center; }
.tools.lower { border-top: 1px solid #b4b4b4; padding-top: 4px; }
.tools .sel { background: #bfdcf3; border: 1px solid #90c8f0; }
.glyph { font: 900 18px/24px "Open Sans", sans-serif; -webkit-text-stroke: 1px #000; }
.hgrip { width: 58px; height: 2px; margin-bottom: 4px; background: linear-gradient(90deg, #b0b0b0 2px, transparent 2px) 0 0 / 4px 2px; }
.hsep { width: 54px; height: 1px; margin: 2px 0 3px; background: #cfcfcf; }
.tools label { line-height: 13px; }
.tools .spin { width: 60px; }
.tools .spin input { padding-left: 9px; }

/* drawing area: takes its height from the row, not from the drawing */
.canvas { display: flex; flex: 1; min-width: 0; margin: 3px 6px 3px 3px; background: #f8f8f8; overflow: hidden; contain: size; }
.canvas > svg { flex: 1; min-width: 0; font-size: 12px; fill: #808080; }
.gl { stroke: #dcdcdc; }
.bed { fill: none; stroke: #000; }
.mid { text-anchor: middle; }
.end { text-anchor: end; }
.axis { font-size: 11px; fill: #704848; }
.shape { fill: none; stroke: #1484b4; stroke-dasharray: 4 1; }
.word { font: bold 17px "Liberation Sans", sans-serif; text-anchor: middle; fill: #000; stroke: #000; }

/* docks */
.docks { display: flex; flex-direction: column; width: 521px; flex: none; }
.dock { display: flex; flex-direction: column; }
.dock.top { flex: 419; }
.dock.bottom { flex: 428; }
.dock h2 { display: flex; align-items: center; justify-content: space-between; height: 22px; flex: none; padding: 0 7px 0 6px; color: #fff; background: linear-gradient(90deg, #000, #c03232 60%, #dc7830); }
.dock h2 span { display: flex; gap: 11px; color: #502c20; }
.vars { display: grid; grid-template-columns: 131px 123px 120px 121px; column-gap: 5px; grid-template-rows: 25px 25px 25px 21px; align-items: center; }
.vars label { text-align: right; }
.vars .two { grid-column: 3 / 5; }
.vars .auto { justify-content: center; }
.ga { font: 900 15px/16px "Open Sans", sans-serif; -webkit-text-stroke: 1px #000; width: 16px; }
.csv { margin: 0 9px; padding: 0; border: 1px solid #dcdcdc; border-top-color: #a0a0a0; border-left-color: transparent; background: linear-gradient(#dcdcdc, #dcdcdc) 48px 9px / 100% 1px no-repeat; }
.csv legend { padding: 3px 0 0; float: left; width: 100%; height: 18px; }
.csv div { clear: both; display: flex; gap: 4px; align-items: center; padding: 1px 7px 1px 0; }
.csv span { flex: 1; }
.csv .btn { width: 96px; height: 21px; }
.tabs { display: flex; align-items: flex-start; margin-top: auto; height: 25px; border-top: 1px solid #a0a0a0; padding-left: 2px; }
.tabs button { height: 19px; padding: 0 10px; border: 1px solid #dcdcdc; border-width: 0 1px 1px 0; }
.tabs .cur { background: #fff; height: 21px; margin-top: -1px; padding: 0 12px; }
.tabs.low { padding-left: 0; height: 21px; }
.tabs.low .cur { padding: 0 10px; }
.ready { height: 22px; padding-top: 3px; }
.run { display: grid; grid-template-columns: 1fr 1fr; gap: 5px; padding: 0 2px 3px; }
.three { grid-template-columns: 1fr 1fr 1fr; }
.run .btn { height: 58px; }
.cutsel { padding: 0 1px 1px; }
.opt { display: grid; grid-template-columns: 1fr 254px; row-gap: 2px; align-items: center; padding: 1px 2px 3px 1px; }
.opt .btn + label + .btn { height: 21px; }
.dev { display: grid; grid-template-columns: 73px 1fr 1fr; gap: 7px; padding: 0 1px 0 2px; }
.dev .btn { height: 21px; }

/* dialogs */
.dialog { position: absolute; background: #f0f0f0; border: 1px solid #a0a0a0; box-shadow: 0 3px 12px rgba(0, 0, 0, .3); }
.dialog header { display: flex; align-items: center; height: 26px; padding: 0 0 1px 4px; gap: 5px; background: #fff; color: #888; }
.dialog header span { flex: 1; }
.dialog header button { width: 44px; display: grid; place-items: center; }
.framing { left: 836px; top: 44px; width: 518px; }
.fbody { display: grid; grid-template-columns: 242px 244px; gap: 7px; padding: 9px 12px 11px; }
.modes { display: grid; gap: 29px; align-content: start; padding-top: 24px; }
.modes .btn { height: 58px; }
.modes .on { background: #cce4f7; border-color: #005499; }
.ctl { display: grid; grid-template-columns: 118px 119px; column-gap: 7px; align-content: start; }
.ctl > label { height: 22px; }
.ctl > label:has(.tg) { gap: 4px; }
.ctl .two { grid-column: 1 / 3; }
.ctl .btn { height: 38px; margin-left: 1px; margin-right: 1px; }
.ctl .start { margin-top: 31px; margin-bottom: 36px; }
.ctl .rc { grid-column: 2; margin-top: 8px; margin-bottom: 4px; }
.ctl .rr { padding-top: 3px; }
.ctl .spin { margin-top: 3px; }
.ctl .cl { grid-column: 2; width: 73px; height: 21px; justify-self: end; margin-top: 26px; }
.skipped { left: 838px; top: 435px; width: 311px; background: #fff; border-color: #666; }
.skipped header { height: 25px; color: #000; padding-left: 3px; }
.skipped header button { width: 31px; }
.msg { padding: 11px 0 11px 33px; line-height: 15px; white-space: nowrap; }
.msg p + p { margin-top: 15px; }
.skipped footer { display: flex; justify-content: flex-end; gap: 8px; padding: 9px 12px 12px 0; background: #f0f0f0; border-top: 1px solid #dcdcdc; }
.skipped .btn { width: 73px; height: 21px; }
.btn.focus { border: 2px solid #0078d7; }

/* palette and status */
.palette { display: flex; align-items: center; height: 34px; padding-left: 4px; border-top: 1px solid #fff; font: 12px/24px "Liberation Sans", sans-serif; }
.palette .grip { margin-right: 7px; }
.palette button { width: 24px; height: 24px; margin-right: 7px; background: var(--c); color: var(--t); }
.palette .cur { outline: 3px solid #bfdcf3; }
.status { display: flex; height: 21px; padding-left: 2px; }
.status label { padding-right: 5px; margin-right: 5px; border-right: 1px solid #d0d0d0; }
.status .shear { padding-right: 16px; margin-right: 4px; }
.status span { padding-top: 3px; }
.xy { width: 637px; }
.info { width: 770px; padding-left: 4px; border: 1px solid #d0d0d0; border-width: 0 1px; }
.taskbar { display: flex; height: 40px; background: linear-gradient(90deg, #29364b, #1f2a40 13%, #273548 26%, #2c3a4d 70%, #22262e 82%, #1f2a44 90%); }
.taskbar button { display: grid; place-items: center; width: 40px; margin-right: 9px; }
.taskbar button:first-child { width: 48px; margin-right: 7px; }
.taskbar .run-app { border-bottom: 2px solid #76b9ed; }
.taskbar .run-app:nth-child(3) { margin-right: 5px; }
.taskbar .act { width: 48px; background: #515b6b; }
.tray { display: flex; align-items: center; gap: 7px; margin-left: auto; color: #fff; }
.tray svg { fill: none; stroke: #fff; }
.tray time { line-height: 18px; text-align: center; margin: 0 12px 0 2px; }
.tray i { width: 1px; height: 40px; background: #8a92a0; margin: 0 4px 0 12px; }
```
